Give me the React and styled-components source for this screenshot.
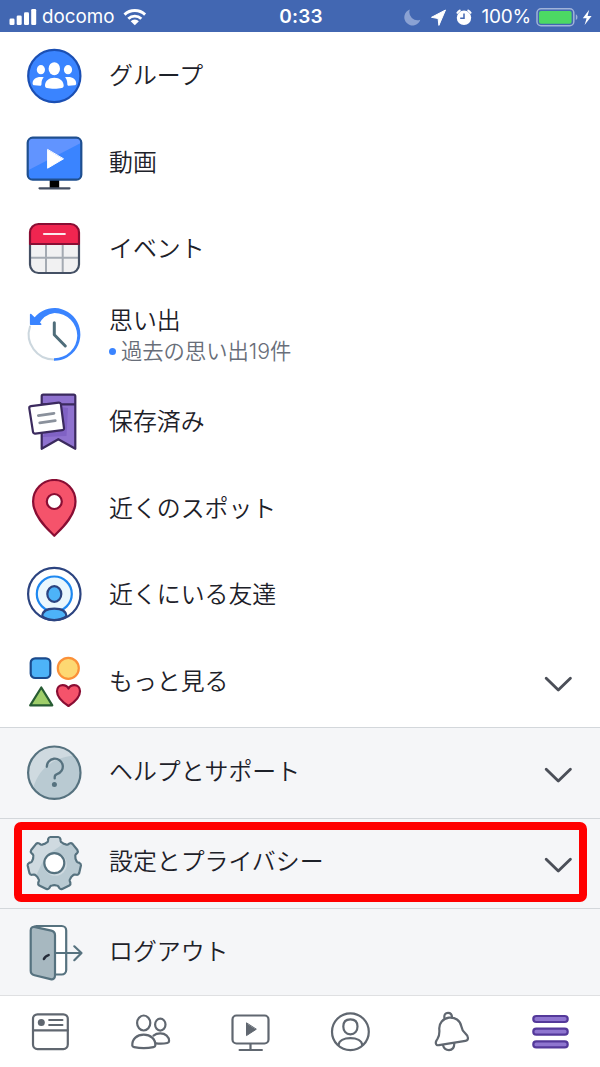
import React from "react";
import styled, { createGlobalStyle } from "styled-components";

const GlobalStyle = createGlobalStyle`
  * {
    box-sizing: border-box;
  }
  body {
    margin: 0;
    background: #ffffff;
    font-family: "Inter", "Noto Sans CJK JP", sans-serif;
  }
  svg {
    display: block;
    flex-shrink: 0;
  }
`;

const Screen = styled.div`
  width: 600px;
  height: 1067px;
  display: flex;
  flex-direction: column;
  overflow: hidden;
  color: #1d2129;
`;

// Status bar
const StatusBar = styled.header`
  height: 32px;
  flex-shrink: 0;
  display: grid;
  grid-template-columns: 1fr auto 1fr;
  align-items: center;
  padding: 0 7px 0 9px;
  background: #4267b2;
  color: #ffffff;
  font-size: 20px;
  line-height: 32px;
`;
const StatusGroup = styled.div`
  display: flex;
  align-items: center;
  justify-content: ${(props) => (props.$end ? "flex-end" : "flex-start")};
`;
const Carrier = styled.span`
  margin: 0 9px 0 5px;
  font-size: 18.8px;
`;
const Clock = styled.span`
  padding-top: 1px;
  font-size: 19px;
  font-weight: 600;
  letter-spacing: 0.2px;
`;
const Percent = styled.span`
  margin: 1px 5px 0 8px;
  font-size: 19px;
  letter-spacing: -0.2px;
`;

// Menu
const Menu = styled.main`
  height: 695px;
  flex-shrink: 0;
  padding-top: 1px;
`;
const Row = styled.div`
  height: 86.5px;
  display: flex;
  align-items: center;
  padding: 0 27px 0 24px;
`;
const SettingsRow = styled(Row)`
  position: relative;
  height: ${(props) => props.$height}px;
  flex-shrink: 0;
  border-top: 1px solid #d3d7db;
  background: #f5f6f8;
`;
const RowText = styled.div`
  flex-grow: 1;
  margin-left: 25px;
  padding-bottom: ${(props) => (props.$lift ? props.$lift : 0)}px;
`;
const Label = styled.div`
  font-family: "Noto Sans CJK JP", sans-serif;
  font-size: 23.9px;
  font-weight: 350;
  line-height: 32px;
`;
const Note = styled.div`
  display: flex;
  align-items: center;
  font-size: 21.3px;
  font-weight: 350;
  line-height: 32px;
  color: #686e79;
  &::before {
    content: "";
    width: 7px;
    height: 7px;
    margin-right: 5px;
    border-radius: 50%;
    background: #3a84ff;
  }
`;
const Highlight = styled.div`
  position: absolute;
  top: 3px;
  left: 14px;
  right: 13px;
  height: 80px;
  border: 8px solid #ff0000;
  border-radius: 7px;
`;
const ChevronIcon = styled.svg`
  margin-top: 5px;

  ${SettingsRow} & {
    margin-top: 3px;
  }
`;

// Bottom tabs
const TabBar = styled.nav`
  flex-grow: 1;
  display: grid;
  grid-template-columns: repeat(6, 100px);
  justify-items: center;
  padding-top: 11px;
  border-top: 1px solid #dfe0e2;
  background: #ffffff;
`;

const Icon = ({ children }) => (
  <svg
    width="60"
    height="60"
    viewBox="0 0 60 60"
    fill="none"
    strokeWidth="2.2"
    strokeLinecap="round"
    strokeLinejoin="round"
  >
    {children}
  </svg>
);

const TabIcon = ({ children }) => (
  <svg
    width="50"
    height="50"
    viewBox="0 0 50 50"
    fill="none"
    stroke="#606770"
    strokeWidth="2.2"
    strokeLinecap="round"
    strokeLinejoin="round"
  >
    {children}
  </svg>
);

const Chevron = () => (
  <ChevronIcon width="30" height="18" viewBox="0 0 30 18" fill="none">
    <path d="M3.2 3.2 15.3 15 27.4 3.2" stroke="#4b4f58" strokeWidth="2.9" strokeLinecap="round" strokeLinejoin="round" />
  </ChevronIcon>
);

const GroupsIcon = () => (
  <Icon>
    <circle cx="30.3" cy="30" r="26.1" fill="#3a84ff" stroke="#1b4fb3" />
    <g fill="#ffffff">
      <ellipse cx="30.3" cy="22.7" rx="5.7" ry="6.5" />
      <ellipse cx="16.9" cy="23.7" rx="4.1" ry="4.6" />
      <ellipse cx="44" cy="23.7" rx="4.1" ry="4.6" />
      <path d="M21 39.5c0-4.6 4-7.8 9.3-7.8s9.4 3.2 9.4 7.8c0 1.4-.8 2.2-2 2.6-4 .9-10.8.9-14.8 0-1.2-.4-1.9-1.2-1.900-2.600z" />
      <path d="M19.800 31.200c-1.500 1.600-2.300 3.700-2.300 6.500 0 1.300-.4 2.100-1.500 2.100-2 0-3.700-.2-5.500-.5-1.300-.2-1.900-.8-1.900-1.900 0-3.700 3.200-6.400 8-6.400 1.200 0 2.200.1 3.200.2z" />
      <path d="M41 31.200c1.500 1.600 2.300 3.700 2.300 6.500 0 1.300.4 2.100 1.500 2.100 2 0 3.700-.2 5.500-.5 1.300-.2 1.900-.8 1.900-1.900 0-3.700-3.200-6.400-8-6.400-1.200 0-2.200.1-3.200.2z" />
    </g>
  </Icon>
);

const VideoIcon = () => (
  <Icon>
    <path d="M25.700 47h9.500v8h-9.500z" fill="#000000" />
    <path d="M15.500 55.300h30" stroke="#444f63" />
    <rect x="3.700" y="4.700" width="53.600" height="42" rx="5" fill="#3a84ff" />
    <path d="M3.700 37.500V9.700a5 5 0 0 1 5-5h43.600a5 5 0 0 1 5 5z" fill="#6194ff" />
    <rect x="3.700" y="4.700" width="53.600" height="42" rx="5" stroke="#1f4f8f" />
    <path d="M23.600 16.800v18.400L39.200 26z" fill="#ffffff" stroke="#ffffff" strokeWidth="1" />
  </Icon>
);

const EventIcon = () => (
  <Icon>
    <rect x="6" y="5" width="49" height="49" rx="8.500" fill="#f1f1f2" />
    <path d="M22 26v28M38.700 26v28M6 38.700h49" stroke="#a4aab2" strokeWidth="2" />
    <path d="M6 25v20.500A8.500 8.500 0 0 0 14.500 54h32a8.500 8.500 0 0 0 8.500-8.500V25" stroke="#445064" />
    <path d="M6 25V13.500A8.500 8.500 0 0 1 14.500 5h32a8.500 8.500 0 0 1 8.500 8.500V25z" fill="#f02550" stroke="#890d33" />
    <path d="M20 15h20.800" stroke="#fbe9ed" />
  </Icon>
);

const MemoriesIcon = () => (
  <Icon>
    <path d="M6 20.500A25.200 25.200 0 0 0 30 53.600" stroke="#ccd7de" strokeWidth="2" />
    <path
      d="M30 54.700A26 26.300 0 1 0 8.300 14.500L14.800 18.500A20.500 20.500 0 0 1 30.500 7 23 22.600 0 1 1 30 52.200z"
      fill="#3a84ff"
    />
    <path d="M6.700 8.500v9.700h10z" fill="#3a84ff" stroke="#3a84ff" strokeWidth="1.600" />
    <path d="M30.300 16.700v12l11 11.300" stroke="#4f6d7a" strokeWidth="3" />
  </Icon>
);

const SavedIcon = () => (
  <Icon>
    <path d="M17.700 4.200a1.500 1.500 0 0 1 1.500-1.500h30.600a1.500 1.500 0 0 1 1.500 1.500v52.600L34.300 47.200 17.700 56.800z" fill="#8f72cf" />
    <path d="M37 15l7 1-1.500 28-24 1z" fill="#8062c4" />
    <path
      d="M17.700 4.200a1.500 1.500 0 0 1 1.500-1.500h30.600a1.500 1.500 0 0 1 1.500 1.500v52.600L34.300 47.200 17.700 56.800zM18 12.300h33"
      stroke="#3b2a5e"
    />
    <path
      d="M7 14.100 34.700 10.600a2 2 0 0 1 2.200 1.700L40 36a2 2 0 0 1-1.700 2.200L11.300 41.600A2 2 0 0 1 9 39.900L5.300 16.300A2 2 0 0 1 7 14.100z"
      fill="#ffffff"
      stroke="#3b2a5e"
    />
    <path d="M14.300 23.600 30 21.300M15.700 30.900 31.300 28.600" stroke="#8a919c" strokeWidth="2.700" />
  </Icon>
);

const PinIcon = () => (
  <Icon>
    <path
      d="M30.300 56.800C26.500 52.500 9.100 38.500 9.100 22.500a21.200 21.500 0 0 1 42.400 0C51.500 38.500 34.100 52.500 30.300 56.800z"
      fill="#f5536b"
      stroke="#890d33"
    />
    <circle cx="30.300" cy="22.500" r="7.500" fill="#ffffff" stroke="#890d33" />
  </Icon>
);

const NearbyIcon = () => (
  <Icon>
    <circle cx="30.300" cy="29" r="17.500" fill="#eaf7fd" stroke="#1e88f0" />
    <ellipse cx="30.300" cy="29" rx="7" ry="7.800" fill="#4db3f8" stroke="#2c4480" />
    <path d="M18.300 51.500c0-5.200 4.200-7.900 12-7.900s12 2.700 12 7.900C35 56.300 25 56.300 18.300 51.500z" fill="#4db3f8" stroke="#2c4480" />
    <circle cx="30.300" cy="29" r="26.200" stroke="#2c4480" />
  </Icon>
);

const MoreIcon = () => (
  <Icon>
    <rect x="6.700" y="6.300" width="19.600" height="19.700" rx="4.500" fill="#4db3f8" stroke="#1b4a8c" />
    <circle cx="44.300" cy="16.300" r="10.500" fill="#fdd872" stroke="#fb9038" />
    <path d="M17.300 35.500 28.300 53.400H6.200z" fill="#9fce6a" stroke="#275c33" />
    <path
      d="M44.500 54C39 50.500 33 45.500 33 39.300c0-3.700 2.500-6.200 5.700-6.200 2.600 0 4.700 1.200 5.800 3.400 1.100-2.200 3.200-3.400 5.800-3.400 3.200 0 5.700 2.500 5.700 6.200C56 45.500 50 50.500 44.500 54z"
      fill="#f5536b"
      stroke="#890d33"
    />
  </Icon>
);

const HelpIcon = () => (
  <Icon>
    <clipPath id="help">
      <circle cx="30.300" cy="29.700" r="26.200" />
    </clipPath>
    <circle cx="30.300" cy="29.700" r="26.200" fill="#b9cad2" />
    <path d="M0 60L9 45C16 23 32 12 60 12V0H0z" fill="#cfdae0" clipPath="url(#help)" />
    <circle cx="30.300" cy="29.700" r="26.200" stroke="#56727f" />
    <path d="M22.800 23.800a8 7.900 0 1 1 10.200 7.400c-1.800.6-2.300 1.300-2.300 3v1.200" stroke="#56727f" strokeWidth="2.300" />
    <circle cx="30.400" cy="41.600" r="2.500" fill="#56727f" />
  </Icon>
);

// Seven rounded teeth around the centre
const gearPoint = (radius, degrees) => {
  const angle = ((degrees - 90) * Math.PI) / 180;
  return `${(30.3 + radius * Math.cos(angle)).toFixed(2)} ${(29.4 + radius * Math.sin(angle)).toFixed(2)}`;
};
const gearPath =
  Array.from({ length: 7 }, (_, i) => {
    const a = (i * 360) / 7;
    return [
      `${i === 0 ? "M" : "L"}${gearPoint(22.2, a - 20)}`,
      `Q${gearPoint(22.3, a - 17)} ${gearPoint(23.3, a - 15.8)}`,
      `L${gearPoint(25.2, a - 14)}`,
      `Q${gearPoint(26.8, a - 12.5)} ${gearPoint(26.7, a - 8.5)}`,
      `L${gearPoint(26.7, a + 8.5)}`,
      `Q${gearPoint(26.8, a + 12.5)} ${gearPoint(25.2, a + 14)}`,
      `L${gearPoint(23.3, a + 15.8)}`,
      `Q${gearPoint(22.3, a + 17)} ${gearPoint(22.2, a + 20)}`,
      `Q${gearPoint(21.4, a + 25.7)} ${gearPoint(22.2, a + 31.4)}`,
    ].join("");
  }).join("") + "z";

const GearIcon = () => (
  <Icon>
    <clipPath id="gear">
      <path d={gearPath} />
    </clipPath>
    <path d={gearPath} fill="#b9cad2" />
    <path d="M0 0h44C41 12 31 14 24 21S15 37 8 50H0z" fill="#cfdae0" clipPath="url(#gear)" />
    <path d={gearPath} stroke="#56727f" />
    <circle cx="31.300" cy="30.300" r="11.500" fill="#cfdae0" />
    <circle cx="30.300" cy="29.100" r="10" fill="#ffffff" stroke="#56727f" />
  </Icon>
);

const LogoutIcon = () => (
  <Icon>
    <rect x="8" y="4" width="34.200" height="48.500" rx="4.500" fill="#ffffff" stroke="#56727f" />
    <path
      d="M6.700 8.500c0-3 2-4 4.600-3.400l16 3.500c2.500.6 3.700 2 3.700 4.500v40.400c0 3-1.800 4.300-4.500 3.600l-16-3.900c-2.500-.6-3.800-2-3.800-4.500z"
      fill="#a7b8c0"
      stroke="#56727f"
    />
    <path d="M32 31h25M50.300 24.300l7.200 6.700-7.200 7.200" stroke="#56727f" />
    <path d="M19.900 37c.8-1.900 2.400-3.300 4.700-3.900" stroke="#252b38" strokeWidth="2.500" />
  </Icon>
);

const menuItems = [
  { label: "グループ", icon: <GroupsIcon /> },
  { label: "動画", icon: <VideoIcon /> },
  { label: "イベント", icon: <EventIcon /> },
  { label: "思い出", note: "過去の思い出19件", icon: <MemoriesIcon /> },
  { label: "保存済み", icon: <SavedIcon /> },
  { label: "近くのスポット", icon: <PinIcon /> },
  { label: "近くにいる友達", icon: <NearbyIcon /> },
  { label: "もっと見る", icon: <MoreIcon />, expandable: true },
];

const settingsItems = [
  { label: "ヘルプとサポート", icon: <HelpIcon />, height: 91, lift: 6, expandable: true },
  { label: "設定とプライバシー", icon: <GearIcon />, height: 90, lift: 7, expandable: true, highlighted: true },
  { label: "ログアウト", icon: <LogoutIcon />, height: 87, lift: 4 },
];

const App = () => {
  return (
    <Screen>
      <GlobalStyle />
      <StatusBar>
        <StatusGroup>
          <svg width="28" height="18" viewBox="0 0 28 18" fill="#ffffff">
            <rect x="0.500" y="10.600" width="5" height="6.400" rx="1.300" />
            <rect x="7.700" y="7.500" width="5" height="9.500" rx="1.300" />
            <rect x="15" y="4.200" width="5" height="12.800" rx="1.300" />
            <rect x="22.200" y="1" width="5" height="16" rx="1.300" />
          </svg>
          <Carrier>docomo</Carrier>
          <svg width="24" height="18" viewBox="0 0 24 18" fill="none" stroke="#ffffff" strokeWidth="2.900">
            <path d="M1.500 6.600a15 15 0 0 1 20.600 0" />
            <path d="M5.300 10.700a9.500 9.500 0 0 1 13 0" />
            <path d="M11.800 17.200 7.700 13.200a5.900 5.900 0 0 1 8.200 0z" fill="#ffffff" stroke="none" />
          </svg>
        </StatusGroup>
        <Clock>0:33</Clock>
        <StatusGroup $end>
          <svg width="70" height="18" viewBox="0 0 70 18">
            <path d="M6.800 1.500a8.200 8.200 0 1 0 10.500 10.300A8.200 8.200 0 0 1 6.800 1.500z" fill="#8ba2d3" />
            <path d="M42.500 2 28.500 9.300l6.600 1.200.8 6.900z" fill="#ffffff" stroke="#ffffff" strokeLinejoin="round" />
            <circle cx="61" cy="9.800" r="7.200" fill="#ffffff" />
            <path d="M54 5.400a8 8 0 0 1 3.500-3.200M68 5.400a8 8 0 0 0-3.500-3.200" fill="none" stroke="#ffffff" strokeWidth="2" />
            <path d="M61 5.500v4.800h-3.800" fill="none" stroke="#4267b2" strokeWidth="1.500" />
          </svg>
          <Percent>100%</Percent>
          <svg width="57" height="20" viewBox="0 0 57 20">
            <rect x="1" y="1.800" width="36.800" height="16.900" rx="4" fill="none" stroke="#a0b3d9" strokeWidth="1.500" />
            <rect x="3" y="3.900" width="32.600" height="12.800" rx="2" fill="#4cd964" />
            <path d="M39.800 7.200c2.200.8 2.200 5 0 5.800z" fill="#a0b3d9" />
            <path d="M53.200 2.800 46.800 11.300h3.800l-2 6.700 7-9h-4z" fill="#ffffff" />
          </svg>
        </StatusGroup>
      </StatusBar>

      <Menu>
        {menuItems.map((item) => (
          <Row key={item.label}>
            {item.icon}
            <RowText $lift={item.note ? 1 : 4}>
              <Label>{item.label}</Label>
              {item.note ? <Note>{item.note}</Note> : ""}
            </RowText>
            {item.expandable ? <Chevron /> : ""}
          </Row>
        ))}
      </Menu>

      {settingsItems.map((item) => (
        <SettingsRow key={item.label} $height={item.height}>
          {item.icon}
          <RowText $lift={item.lift}>
            <Label>{item.label}</Label>
          </RowText>
          {item.expandable ? <Chevron /> : ""}
          {item.highlighted ? <Highlight /> : ""}
        </SettingsRow>
      ))}

      <TabBar>
        <TabIcon>
          <rect x="8" y="7.300" width="34.800" height="34.800" rx="4.500" />
          <path d="M8 23.300h34.800M24.200 13h13.200M24.200 18h13.200" />
          <circle cx="16.300" cy="15.600" r="3.500" fill="#606770" stroke="none" />
        </TabIcon>
        <TabIcon>
          <ellipse cx="18.700" cy="16" rx="6.600" ry="7.500" />
          <ellipse cx="35.300" cy="17.600" rx="5.200" ry="6" />
          <path d="M7.300 38.600C7 32 12 27.700 18.700 27.700S30.800 32 30.300 38.600c-.1 1-.8 1.300-1.800 1.500-5.700 1.100-13.700 1.100-19.400 0-1-.2-1.700-.5-1.800-1.500z" />
          <path d="M28.500 28.600c1.800-1.500 4.200-2.200 6.800-2.200 5.200 0 8.800 3.200 8.800 7.700 0 1.300-.5 1.600-1.800 1.900-3.600.8-7.600.9-11.500.3" />
        </TabIcon>
        <TabIcon>
          <rect x="7.500" y="8.500" width="36" height="28" rx="4" />
          <path d="M14.600 43h22.300M25.500 37v5.500" />
          <path d="M21.500 16.200v12.400l9.500-6.200z" fill="#606770" strokeWidth="1" />
        </TabIcon>
        <TabIcon>
          <circle cx="25.400" cy="24.800" r="18.400" />
          <path d="M25.400 12.400c4.700 0 7.100 2.900 7.100 7.200s-2.700 7.700-7.100 7.700-7.100-3.400-7.100-7.700 2.400-7.200 7.100-7.200z" />
          <path d="M13.500 38c.5-4.300 5.400-6.900 11.900-6.900s11.400 2.600 11.900 6.900" />
        </TabIcon>
        <TabIcon>
          <path d="M19.500 11.500c-.8-4.200 1.200-5.600 3.500-5.600s4 1.500 4 4.700" />
          <path d="M24 10.700c6-.8 11.200 2.700 12.300 8.500.6 3.300 1.500 5.200 4 7.200 1.500 1.300 2.700 2.600 2.700 4.600 0 1.800-.7 2.600-2.600 2.900L14 38.200c-1.900.3-3-.3-3.200-2-.2-1.700.8-3.200 1.800-4.600 2.200-3.300 2-5.500 1.700-9.200C13.800 16.200 18 11.500 24 10.700z" />
          <path d="M18 38.200c.8 3 3.200 4.900 6 4.900 3.200 0 5.200-2.600 5.300-6.500" />
        </TabIcon>
        <TabIcon>
          <g fill="#8f76d0" stroke="#54399a">
            <rect x="8.300" y="9" width="34.400" height="6" rx="3" />
            <rect x="8.300" y="21.700" width="34.400" height="6" rx="3" />
            <rect x="8.300" y="34.400" width="34.400" height="6" rx="3" />
          </g>
        </TabIcon>
      </TabBar>
    </Screen>
  );
};

export default App;
